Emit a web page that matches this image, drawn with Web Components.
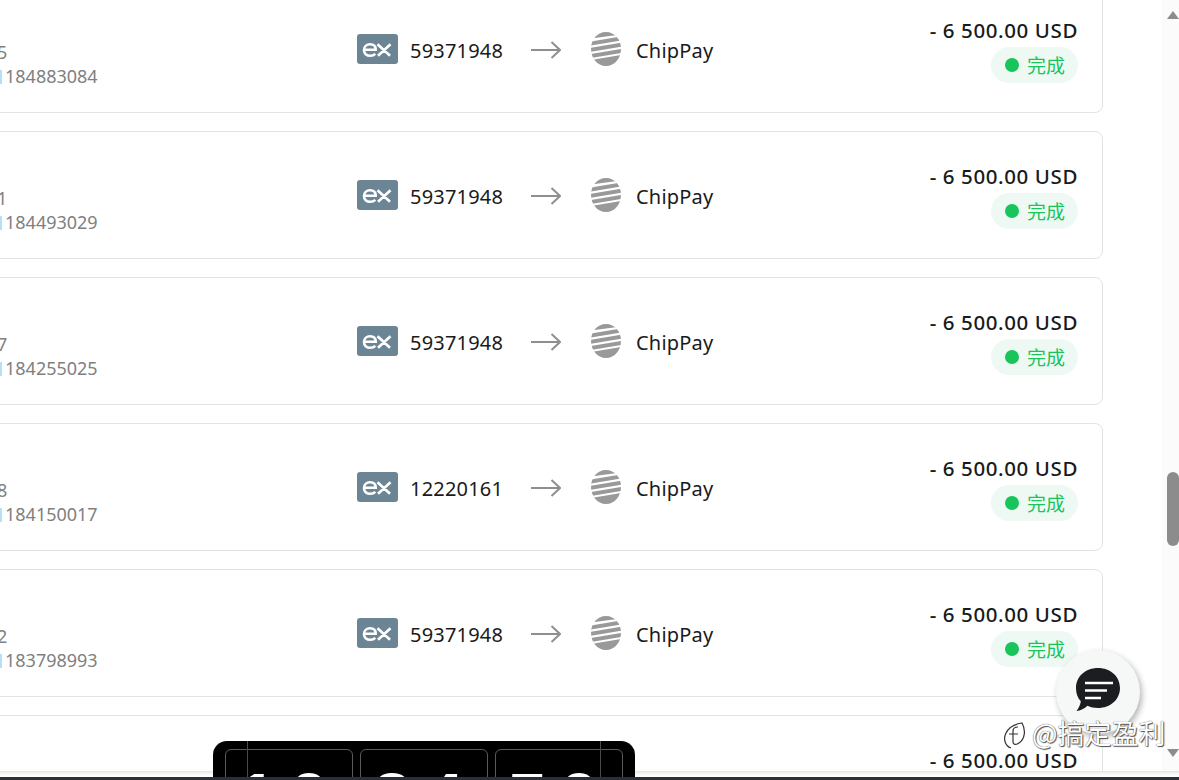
<!DOCTYPE html>
<html>
<head>
<meta charset="utf-8">
<title>Transactions</title>
<style>
    html, body { margin: 0; height: 100%; overflow: hidden; background: #fff; }
    body { font-family: "Noto Sans", "Noto Sans CJK SC", sans-serif; position: relative; }
    .page { display: flex; height: 780px; }
    .page tx-list { flex: 1; min-width: 0; }
</style>
</head>
<body>
<template id="tx-row-tpl">
    <style>
        :host { display: grid; grid-template-columns: 396px 400px 1fr; align-items: center; box-sizing: border-box; height: 128px; border: 1px solid #e3e3e3; border-radius: 8px; background: #fff; color: #1a1a1a; padding: 0 24px 0 0; }
        .ids { padding: 29px 0 0 39px; font-size: 18px; line-height: 24px; color: #808080; }
        .ids .seq { margin-left: -3px; white-space: nowrap; height: 24px; }
        .ids .num { white-space: nowrap; }
        .ids .num::before { content: ""; display: inline-block; width: 2px; height: 14px; background: #b5e0f5; margin-right: 3px; vertical-align: -1px; }
        .route { display: flex; align-items: center; font-size: 20px; letter-spacing: .2px; }
        .route span { padding-top: 2px; }
        .badge { width: 41px; height: 30px; margin-right: 12px; flex: none; }
        .acct { width: 121px; flex: none; }
        .arrow { width: 30px; height: 20px; flex: none; margin-top: 2px; }
        .coin { width: 30px; height: 34px; flex: none; margin-left: 30px; margin-right: 15px; }
        .pay { white-space: nowrap; }
        .end { display: flex; flex-direction: column; align-items: flex-end; gap: 3px; }
        .amt { font-size: 20.5px; font-weight: 500; line-height: 28px; white-space: nowrap; letter-spacing: .6px; }
        .pill { display: flex; align-items: center; gap: 8px; height: 36px; padding: 0 13px 0 14px; border-radius: 18px; background: #eff9f3; color: #19c45b; font-size: 19px; font-family: "Noto Sans CJK SC", sans-serif; }
        .pill i { width: 14px; height: 14px; border-radius: 50%; background: #19c45b; }
    </style>
    <div class="ids"><div class="seq"></div><div class="num"></div></div>
    <div class="route">
        <svg class="badge" viewBox="0 0 41 30"><rect width="41" height="30" rx="3" fill="#6c8595"/><path d="M7 15.800h11.700c0-3.500-2.300-5.500-5.700-5.500s-6 2.300-6 5.800 2.500 5.700 6.200 5.700c2.100 0 3.800-.6 5.100-1.900M20.500 10.300l12.500 11.500M33.500 10.300l-12.500 11.500" fill="none" stroke="#fff" stroke-width="2.600"/></svg>
        <span class="acct"></span>
        <svg class="arrow" viewBox="0 0 30 20"><path d="M0 10h29M20.500 2l8.500 8-8.500 8" fill="none" stroke="#8f8f8f" stroke-width="2"/></svg>
        <svg class="coin" viewBox="0 0 30 34"><defs><clipPath id="egg"><path d="M15 0C24 0 30 8 30 16.500 30 26 24 34 15 34 6 34 0 26 0 16.500 0 8 6 0 15 0Z"/></clipPath></defs><g clip-path="url(#egg)" fill="#999"><path d="M0 6.500 30 2.500V-2H0z"/><path d="M0 13.500 30 8.500V4.500L0 9.500z"/><path d="M0 19.700 30 14.700V10.700L0 15.700z"/><path d="M0 25.900 30 20.900V16.900L0 21.900z"/><path d="M0 36H30V23L0 28z"/></g></svg>
        <span class="pay">ChipPay</span>
    </div>
    <div class="end">
        <div class="amt">- 6 500.00 USD</div>
        <div class="pill"><i></i><span>完成</span></div>
    </div>
</template>

<div class="page">
    <tx-list>
        <tx-row seq="5" num="184883084" acct="59371948"></tx-row>
        <tx-row seq="1" num="184493029" acct="59371948"></tx-row>
        <tx-row seq="7" num="184255025" acct="59371948"></tx-row>
        <tx-row seq="8" num="184150017" acct="12220161"></tx-row>
        <tx-row seq="2" num="183798993" acct="59371948"></tx-row>
        <tx-row seq="" num="" acct=""></tx-row>
    </tx-list>
    <page-scrollbar></page-scrollbar>
</div>
<chat-fab></chat-fab>
<window-edge></window-edge>
<timer-banner></timer-banner>
<water-mark></water-mark>
<bottom-bar></bottom-bar>

<script>
class TxList extends HTMLElement {
    constructor() {
        super();
        this.attachShadow({ mode: 'open' });
        this.shadowRoot.innerHTML = `
            <style>
                :host { display: block; overflow: hidden; height: 780px; }
                .stack { display: flex; flex-direction: column; gap: 18px; margin: -15px 59px 0 -40px; }
            </style>
            <div class="stack"><slot></slot></div>
        `;
    }
}

class TxRow extends HTMLElement {
    constructor() {
        super();
        this.attachShadow({ mode: 'open' });
        this.shadowRoot.appendChild(document.getElementById('tx-row-tpl').content.cloneNode(true));
    }

    connectedCallback() {
        const root = this.shadowRoot;
        root.querySelector('.seq').textContent = this.getAttribute('seq');
        root.querySelector('.num').textContent = this.getAttribute('num');
        root.querySelector('.acct').textContent = this.getAttribute('acct');
    }
}

class PageScrollbar extends HTMLElement {
    constructor() {
        super();
        this.attachShadow({ mode: 'open' });
        this.shadowRoot.innerHTML = `
            <style>
                :host { display: flex; flex-direction: column; align-items: flex-end; width: 17px; flex: none; background: #fbfbfb; box-sizing: border-box; padding-top: 11px; }
                .up { width: 0; height: 0; border: 6.5px solid transparent; border-top: 0; border-bottom: 8px solid #8c8c8c; }
                .thumb { width: 12px; height: 74px; margin-top: 453px; border-radius: 6px; background: #8c8c8c; }
                .down { width: 0; height: 0; margin-top: 203px; border: 6.5px solid transparent; border-bottom: 0; border-top: 8px solid #8c8c8c; }
            </style>
            <div class="up"></div><div class="thumb"></div><div class="down"></div>
        `;
    }
}

class ChatFab extends HTMLElement {
    constructor() {
        super();
        this.attachShadow({ mode: 'open' });
        this.shadowRoot.innerHTML = `
            <style>
                :host { position: absolute; left: 1056px; top: 650px; width: 84px; height: 84px; border-radius: 50%; background: #f6f8f7; box-shadow: 2px 3px 6px rgba(0,0,0,.3); display: flex; align-items: center; justify-content: center; }
                svg { width: 46px; height: 44px; margin-top: -4px; }
            </style>
            <svg viewBox="0 0 46 44"><path d="M23 0C35.500 0 45 8.500 45 20S35.500 40 23 40C19 40 15.500 39.300 12.500 37.800 9.500 40.500 5.500 42.800 1.500 43 3.800 40 5.300 37 5.800 33.300 2.400 30 1 25 1 20 1 8.500 10.500 0 23 0Z" fill="#1b1d20"/><path d="M10 15H38M10 22.500H32M10 30H26" stroke="#fff" stroke-width="2.600" fill="none"/></svg>
        `;
    }
}

class TimerBanner extends HTMLElement {
    constructor() {
        super();
        this.attachShadow({ mode: 'open' });
        this.shadowRoot.innerHTML = `
            <style>
                :host { position: absolute; left: 213px; top: 741px; width: 422px; height: 36px; overflow: hidden; background: #000; border-radius: 14px 14px 0 0; box-sizing: border-box; padding: 8px 12px 0; display: flex; gap: 7px; }
                .cell { flex: 1; height: 80px; border: 1px solid #5a5a5a; border-radius: 6px; color: #fff; font: 700 72px/1 "Liberation Sans", sans-serif; text-align: center; padding-top: 13px; letter-spacing: 12px; box-sizing: border-box; }
                .guide { position: absolute; top: 0; bottom: 0; width: 1px; background: #4a4a4a; }
            </style>
            <div class="guide" style="left:34px"></div><div class="guide" style="left:387px"></div>
            <div class="cell">10</div><div class="cell">24</div><div class="cell">50</div>
        `;
    }
}

class WaterMark extends HTMLElement {
    constructor() {
        super();
        this.attachShadow({ mode: 'open' });
        this.shadowRoot.innerHTML = `
            <style>
                :host { position: absolute; left: 1002px; top: 717px; display: flex; align-items: center; gap: 6px; color: #fff; font: 27px/32px "Noto Sans CJK SC", sans-serif; white-space: nowrap; text-shadow: 0 0 1px #222, 1px 1px 1px #555; }
                svg { width: 24px; height: 32px; flex: none; }
            </style>
            <svg viewBox="0 0 24 32"><path d="M9 31C3 29 1 22 4 16 7 10 13 7 20 6 24 13 23 22 17 26 14 28 11 28 11 25V14C11 11 13 10 16 10M7 17H16" fill="#fff" fill-opacity=".6" stroke="#333" stroke-width="1.200"/></svg>
            <span>@搞定盈利</span>
        `;
    }
}

class WindowEdge extends HTMLElement {
    constructor() {
        super();
        this.attachShadow({ mode: 'open' });
        this.shadowRoot.innerHTML = `
            <style>
                :host { position: absolute; left: 0; right: 0; top: 771px; height: 6px; display: block; background: linear-gradient(#e2e2e2 0, #f2f2f2 2px, #fff 5px); border-radius: 0 0 8px 0; }
            </style>
        `;
    }
}

class BottomBar extends HTMLElement {
    constructor() {
        super();
        this.attachShadow({ mode: 'open' });
        this.shadowRoot.innerHTML = `
            <style>
                :host { position: absolute; left: 0; right: 0; top: 777px; height: 3px; display: block; background: #2b3036; }
            </style>
        `;
    }
}

customElements.define('tx-list', TxList);
customElements.define('tx-row', TxRow);
customElements.define('page-scrollbar', PageScrollbar);
customElements.define('chat-fab', ChatFab);
customElements.define('timer-banner', TimerBanner);
customElements.define('water-mark', WaterMark);
customElements.define('window-edge', WindowEdge);
customElements.define('bottom-bar', BottomBar);
</script>
</body>
</html>
